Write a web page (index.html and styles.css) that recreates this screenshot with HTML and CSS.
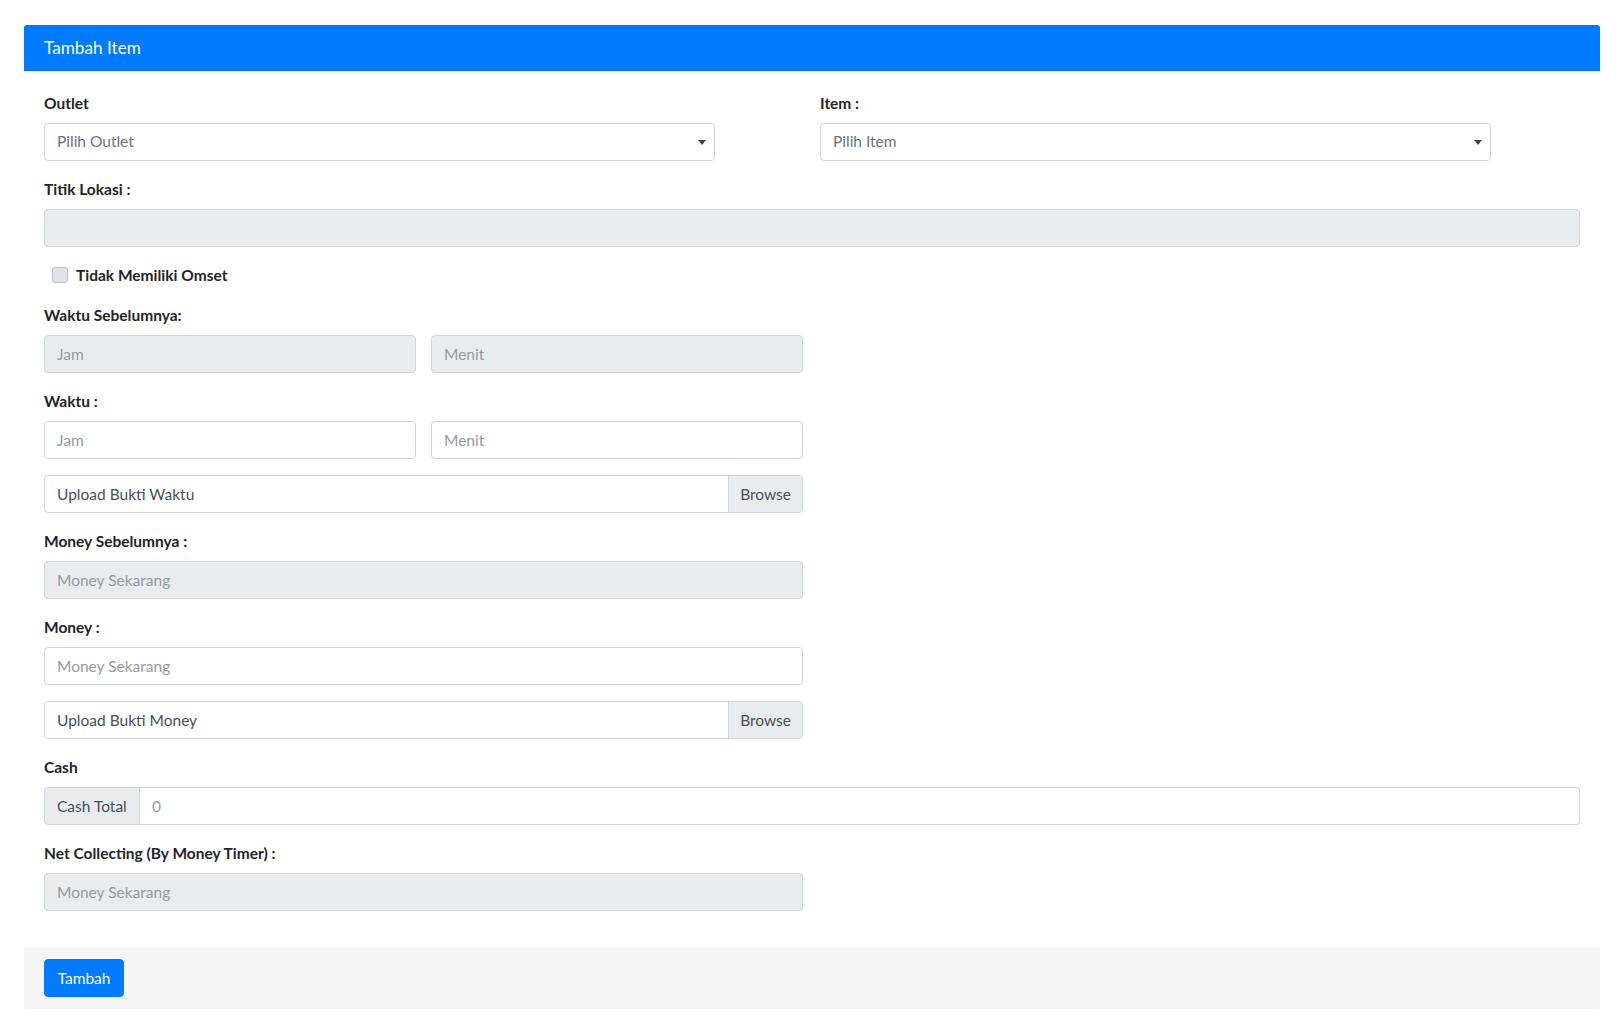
FILE: index.html
```html
<!DOCTYPE html>
<html lang="id">
<head>
<meta charset="utf-8">
<title>Tambah Item</title>
<link rel="stylesheet" href="styles.css">
</head>
<body>
<div class="page">
  <div class="card">
    <div class="card-header"><h3 class="card-title">Tambah Item</h3></div>
    <div class="card-body">
      <div class="row-two">
        <div class="form-group col-sel">
          <label class="lbl">Outlet</label>
          <div class="select">
            <span class="select-text">Pilih Outlet</span>
            <span class="select-arrow"></span>
          </div>
        </div>
        <div class="form-group col-sel">
          <label class="lbl">Item :</label>
          <div class="select">
            <span class="select-text">Pilih Item</span>
            <span class="select-arrow"></span>
          </div>
        </div>
      </div>

      <div class="form-group">
        <label class="lbl">Titik Lokasi :</label>
        <input class="form-control" type="text" disabled>
      </div>

      <div class="form-group check-row">
        <span class="checkbox"></span>
        <label class="lbl check-lbl">Tidak Memiliki Omset</label>
      </div>

      <div class="half">
        <div class="form-group">
          <label class="lbl">Waktu Sebelumnya:</label>
          <div class="pair">
            <input class="form-control" type="text" placeholder="Jam" disabled>
            <input class="form-control" type="text" placeholder="Menit" disabled>
          </div>
        </div>

        <div class="form-group">
          <label class="lbl">Waktu :</label>
          <div class="pair">
            <input class="form-control" type="text" placeholder="Jam">
            <input class="form-control" type="text" placeholder="Menit">
          </div>
        </div>

        <div class="form-group">
          <div class="file-input">
            <span class="file-label">Upload Bukti Waktu</span>
            <span class="file-btn">Browse</span>
          </div>
        </div>

        <div class="form-group">
          <label class="lbl">Money Sebelumnya :</label>
          <input class="form-control" type="text" placeholder="Money Sekarang" disabled>
        </div>

        <div class="form-group">
          <label class="lbl">Money :</label>
          <input class="form-control" type="text" placeholder="Money Sekarang">
        </div>

        <div class="form-group">
          <div class="file-input">
            <span class="file-label">Upload Bukti Money</span>
            <span class="file-btn">Browse</span>
          </div>
        </div>
      </div>

      <div class="form-group">
        <label class="lbl">Cash</label>
        <div class="input-group">
          <span class="addon">Cash Total</span>
          <input class="form-control group-input" type="text" placeholder="0">
        </div>
      </div>

      <div class="half">
        <div class="form-group">
          <label class="lbl">Net Collecting (By Money Timer) :</label>
          <input class="form-control" type="text" placeholder="Money Sekarang" disabled>
        </div>
      </div>
    </div>
    <div class="card-footer">
      <button class="btn" type="button">Tambah</button>
    </div>
  </div>
</div>
</body>
</html>
```

FILE: styles.css
```css
* { box-sizing: border-box; }
html, body { margin: 0; padding: 0; background: #ffffff; }
body {
  font-family: "Lato", "Liberation Sans", sans-serif;
  font-size: 16px;
  line-height: 1.5;
  color: #212529;
}
.page { padding: 25px 24px 24px 24px; }
.card {
  background: #fff;
  border-radius: 3px;
}
.card-header {
  background: #007bff;
  color: #fff;
  padding: 12px 20px;
  border-radius: 3px 3px 0 0;
  border-bottom: 1px solid rgba(0,0,0,0.06);
}
.card-title {
  margin: 0;
  font-size: 17.2px;
  font-weight: 400;
  line-height: 21px;
}
.card-body { padding: 20px 20px 20px 20px; }
.form-group { margin-bottom: 16px; }
.lbl {
  display: block;
  font-weight: 700;
  margin-bottom: 8px;
  line-height: 24px;
  font-size: 15.5px;
}
.row-two { display: flex; gap: 105px; }
.col-sel { width: 671px; }
.select {
  height: 38px;
  border: 1px solid #ced4da;
  border-radius: 4px;
  display: flex;
  align-items: center;
  padding: 0 12px;
  position: relative;
}
.select-text { color: #6c757d; font-size: 15.5px; }
.select-arrow {
  position: absolute;
  right: 8px;
  top: 16px;
  width: 0; height: 0;
  border-style: solid;
  border-width: 5px 4px 0 4px;
  border-color: #444 transparent transparent transparent;
}
.form-control {
  display: block;
  width: 100%;
  height: 38px;
  padding: 6px 12px;
  font-family: inherit;
  font-size: 15.5px;
  color: #495057;
  background: #fff;
  border: 1px solid #ced4da;
  border-radius: 4px;
  outline: none;
}
.form-control::placeholder { color: #939ba2; opacity: 1; }
.form-control:disabled { background: #e9ecef; }
.check-row { display: flex; align-items: center; height: 24px; padding-left: 8px; }
.checkbox {
  width: 16px; height: 16px;
  border: 1px solid #b9bec4;
  border-radius: 3px;
  background: #dfe2e6;
  margin-right: 8px;
}
.check-lbl { margin: 0; }
.half { width: 759px; }
.pair { display: flex; gap: 15px; }
.pair .form-control { flex: 1; }
.file-input {
  display: flex;
  height: 38px;
  border: 1px solid #ced4da;
  border-radius: 4px;
  overflow: hidden;
  font-size: 15.5px;
  color: #495057;
}
.file-label { flex: 1; padding: 6px 12px; line-height: 24px; }
.file-btn {
  background: #e9ecef;
  border-left: 1px solid #ced4da;
  padding: 6px 11px;
  line-height: 24px;
}
.input-group { display: flex; }
.addon {
  background: #e9ecef;
  border: 1px solid #ced4da;
  border-radius: 4px 0 0 4px;
  padding: 6px 12px;
  line-height: 24px;
  height: 38px;
  color: #495057;
  font-size: 15.5px;
  white-space: nowrap;
  width: 96px;
}
.group-input { border-radius: 0 4px 4px 0; border-left: none; flex: 1; }
.card-footer {
  background: #f5f5f5;
  padding: 12px 20px;
  border-radius: 0 0 3px 3px;
}
.btn {
  background: #007bff;
  color: #fff;
  border: 1px solid #007bff;
  border-radius: 4px;
  height: 38px;
  width: 80px;
  font-family: inherit;
  font-size: 15.5px;
  padding: 0;
}
```
